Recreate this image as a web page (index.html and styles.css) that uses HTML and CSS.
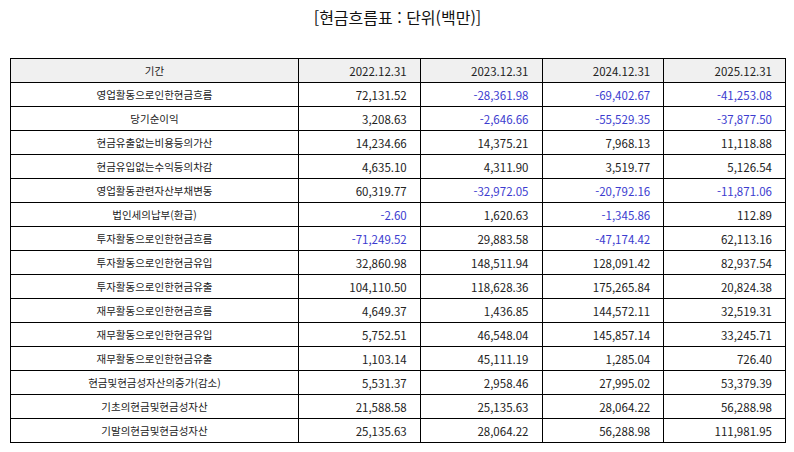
FILE: index.html
```
<!DOCTYPE html>
<html lang="ko">
<head>
<meta charset="utf-8">
<link rel="stylesheet" href="styles.css">
</head>
<body>
<div class="page">
<h1 class="title">[현금흐름표 : 단위(백만)]</h1>
<table class="cf">
<colgroup><col class="c-label"><col class="c-num"><col class="c-num"><col class="c-num"><col class="c-num"></colgroup>
<thead>
<tr class="head"><th>기간</th><th>2022.12.31</th><th>2023.12.31</th><th>2024.12.31</th><th>2025.12.31</th></tr>
</thead>
<tbody>
<tr><td>영업활동으로인한현금흐름</td><td>72,131.52</td><td class="neg">-28,361.98</td><td class="neg">-69,402.67</td><td class="neg">-41,253.08</td></tr>
<tr><td>당기순이익</td><td>3,208.63</td><td class="neg">-2,646.66</td><td class="neg">-55,529.35</td><td class="neg">-37,877.50</td></tr>
<tr><td>현금유출없는비용등의가산</td><td>14,234.66</td><td>14,375.21</td><td>7,968.13</td><td>11,118.88</td></tr>
<tr><td>현금유입없는수익등의차감</td><td>4,635.10</td><td>4,311.90</td><td>3,519.77</td><td>5,126.54</td></tr>
<tr><td>영업활동관련자산부채변동</td><td>60,319.77</td><td class="neg">-32,972.05</td><td class="neg">-20,792.16</td><td class="neg">-11,871.06</td></tr>
<tr><td>법인세의납부(환급)</td><td class="neg">-2.60</td><td>1,620.63</td><td class="neg">-1,345.86</td><td>112.89</td></tr>
<tr><td>투자활동으로인한현금흐름</td><td class="neg">-71,249.52</td><td>29,883.58</td><td class="neg">-47,174.42</td><td>62,113.16</td></tr>
<tr><td>투자활동으로인한현금유입</td><td>32,860.98</td><td>148,511.94</td><td>128,091.42</td><td>82,937.54</td></tr>
<tr><td>투자활동으로인한현금유출</td><td>104,110.50</td><td>118,628.36</td><td>175,265.84</td><td>20,824.38</td></tr>
<tr><td>재무활동으로인한현금흐름</td><td>4,649.37</td><td>1,436.85</td><td>144,572.11</td><td>32,519.31</td></tr>
<tr><td>재무활동으로인한현금유입</td><td>5,752.51</td><td>46,548.04</td><td>145,857.14</td><td>33,245.71</td></tr>
<tr><td>재무활동으로인한현금유출</td><td>1,103.14</td><td>45,111.19</td><td>1,285.04</td><td>726.40</td></tr>
<tr><td>현금및현금성자산의증가(감소)</td><td>5,531.37</td><td>2,958.46</td><td>27,995.02</td><td>53,379.39</td></tr>
<tr><td>기초의현금및현금성자산</td><td>21,588.58</td><td>25,135.63</td><td>28,064.22</td><td>56,288.98</td></tr>
<tr><td>기말의현금및현금성자산</td><td>25,135.63</td><td>28,064.22</td><td>56,288.98</td><td>111,981.95</td></tr>
</tbody>
</table>
</div>
</body>
</html>
```
FILE: styles.css
```
html, body {
  margin: 0;
  padding: 0;
  background: #ffffff;
}
.page {
  padding: 0 9px 0 10px;
  font-family: "Noto Sans CJK KR", "Noto Sans", sans-serif;
  color: #222222;
}
.title {
  margin: 0;
  height: 58px;
  padding-top: 5px;
  box-sizing: border-box;
  text-align: center;
  font-size: 16px;
  font-weight: 400;
  line-height: 24px;
  color: #111111;
}
.cf {
  width: 775px;
  border-collapse: collapse;
  table-layout: fixed;
  font-size: 11.5px;
}
.c-label { width: 288px; }
.c-num { width: 121.75px; }
.cf th, .cf td {
  border: 1px solid #000000;
  height: 23px;
  padding: 0 13px 0 8px;
  font-weight: 400;
  line-height: 14px;
  text-align: right;
  white-space: nowrap;
}
.cf th:first-child, .cf td:first-child {
  text-align: center;
  font-size: 10.5px;
  padding: 0 8px;
}
.head th {
  background: #f0f0f0;
}
.cf td.neg {
  color: #3c3ccf;
}
```
